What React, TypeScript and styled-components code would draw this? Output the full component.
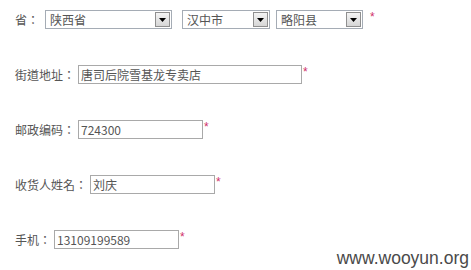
import React from 'react';
import styled, { createGlobalStyle } from 'styled-components';

const GlobalStyle = createGlobalStyle`
  html, body {
    margin: 0;
    padding: 0;
    background: #ffffff;
  }
  body {
    font-family: "Noto Sans CJK SC", "Liberation Sans", sans-serif;
    font-size: 12px;
    color: #555;
  }
`;

interface FieldProps {
  label: string;
  value: string;
  width: number;
}

const Field: React.FC<FieldProps> = ({ label, value, width }) => (
  <Row>
    <Label>{label}</Label>
    <TextBox $width={width}>{value}</TextBox>
    <Star>*</Star>
  </Row>
);

interface SelectProps {
  value: string;
  width: number;
  gap?: number;
}

const Select: React.FC<SelectProps> = ({ value, width, gap }) => (
  <SelectBox $width={width} $gap={gap}>
    <SelectText>{value}</SelectText>
    <ArrowButton>
      <svg width="7" height="4" viewBox="0 0 7 4">
        <path d="M0 0h7L3.5 4z" fill="#000" />
      </svg>
    </ArrowButton>
  </SelectBox>
);

const App: React.FC = () => {
  return (
    <Page>
      <GlobalStyle />
      <Row>
        <Label $gap={6}>省：</Label>
        <Select value="陕西省" width={127} gap={10} />
        <Select value="汉中市" width={88} gap={6} />
        <Select value="略阳县" width={87} />
        <Star $gap={7}>*</Star>
      </Row>
      <Field label="街道地址：" value="唐司后院雪基龙专卖店" width={224} />
      <Field label="邮政编码：" value="724300" width={125} />
      <Field label="收货人姓名：" value="刘庆" width={125} />
      <Field label="手机：" value="13109199589" width={125} />
      <Watermark>www.wooyun.org</Watermark>
    </Page>
  );
};

export default App;

const Page = styled.div`
  position: relative;
  width: 471px;
  height: 270px;
  padding: 10px 0 0 15px;
  box-sizing: border-box;
  display: flex;
  flex-direction: column;
  gap: 36px;
`;

const Row = styled.div`
  display: flex;
  align-items: center;
  height: 19px;
`;

const Label = styled.span<{ $gap?: number }>`
  font-family: "Noto Sans CJK TC", "Noto Sans CJK SC", sans-serif;
  color: #555;
  font-size: 12px;
  line-height: 19px;
  white-space: nowrap;
  margin-right: ${(p) => p.$gap ?? 3}px;
`;

const SelectBox = styled.div<{ $width: number; $gap?: number }>`
  width: ${(p) => p.$width}px;
  height: 19px;
  margin-right: ${(p) => p.$gap ?? 0}px;
  box-sizing: border-box;
  border: 1px solid #a5acb5;
  display: flex;
  align-items: center;
  justify-content: space-between;
  padding: 0 1px 0 4px;
  background: #fff;
`;

const SelectText = styled.span`
  color: #555;
  font-size: 12px;
`;

const ArrowButton = styled.div`
  width: 15px;
  height: 15px;
  box-sizing: border-box;
  border: 1px solid #8f8f8f;
  background: linear-gradient(#f4f4f4, #d6d6d6);
  display: flex;
  align-items: center;
  justify-content: center;
`;

const TextBox = styled.div<{ $width: number }>`
  width: ${(p) => p.$width}px;
  height: 19px;
  box-sizing: border-box;
  border: 1px solid #a9a9a9;
  padding: 0 2px;
  color: #555;
  font-size: 12px;
  line-height: 17px;
  white-space: nowrap;
`;

const Star = styled.span<{ $gap?: number }>`
  color: #d0306a;
  font-family: "Liberation Sans", sans-serif;
  font-size: 12px;
  margin-left: ${(p) => p.$gap ?? 1}px;
  align-self: flex-start;
  line-height: 14px;
`;

const Watermark = styled.div`
  position: absolute;
  right: 2px;
  bottom: 1px;
  font-family: "Liberation Sans", sans-serif;
  font-size: 17.5px;
  color: #4a4a4a;
`;
